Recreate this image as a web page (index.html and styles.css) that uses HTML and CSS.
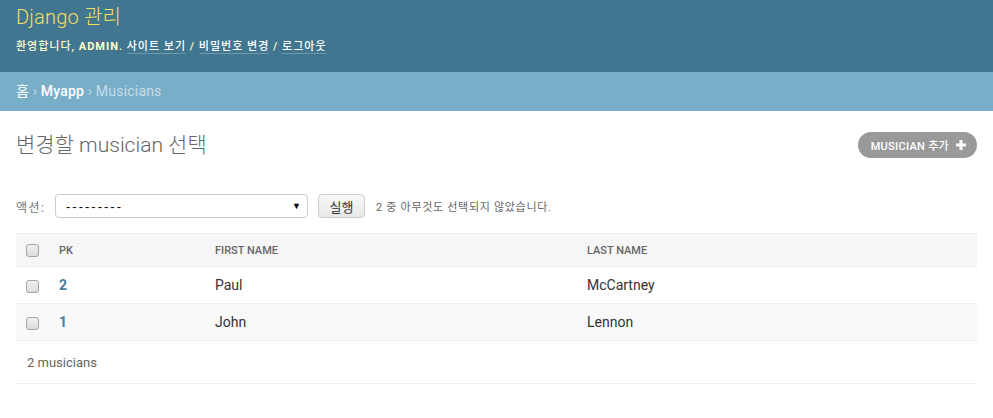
FILE: index.html
```html
<!DOCTYPE html>
<html lang="ko">
<head>
<meta charset="utf-8">
<title>변경할 musician 선택 | Django 사이트 관리</title>
<link rel="stylesheet" href="styles.css">
</head>
<body>
<header class="header">
  <h1 class="branding">Django 관리</h1>
  <div class="user-tools">환영합니다, <strong>ADMIN</strong>. <a href="#">사이트 보기</a> / <a href="#">비밀번호 변경</a> / <a href="#">로그아웃</a></div>
</header>
<nav class="breadcrumbs"><a href="#">홈</a> › <a href="#" class="strong">Myapp</a> › Musicians</nav>
<main class="content">
  <div class="title-row">
    <h1 class="title">변경할 musician 선택</h1>
    <a href="#" class="addlink">MUSICIAN 추가
      <svg class="plus" width="10" height="10" viewBox="0 0 10 10"><path d="M3.5 0h3v3.5H10v3H6.5V10h-3V6.5H0v-3h3.5z" fill="#fff"/></svg>
    </a>
  </div>
  <div class="actions">
    <span class="action-label">액션:</span>
    <div class="select"><span class="dashes">---------</span><span class="arrow">▼</span></div>
    <button class="go">실행</button>
    <span class="counter">2 중 아무것도 선택되지 않았습니다.</span>
  </div>
  <table class="result-list">
    <colgroup><col class="c0"><col class="c1"><col class="c2"><col class="c3"></colgroup>
    <thead>
      <tr><th class="cb"><input type="checkbox"></th><th>PK</th><th>FIRST NAME</th><th>LAST NAME</th></tr>
    </thead>
    <tbody>
      <tr class="row1"><td class="cb"><input type="checkbox"></td><th><a href="#">2</a></th><td>Paul</td><td>McCartney</td></tr>
      <tr class="row2"><td class="cb"><input type="checkbox"></td><th><a href="#">1</a></th><td>John</td><td>Lennon</td></tr>
    </tbody>
  </table>
  <p class="paginator">2 musicians</p>
</main>
</body>
</html>
```
FILE: styles.css
```css
* { box-sizing: border-box; }
html, body { margin: 0; padding: 0; }
body {
  font-family: Roboto, "Noto Sans CJK KR", "Liberation Sans", sans-serif;
  font-size: 14px;
  color: #333;
  background: #fff;
}
a { text-decoration: none; }

.header {
  background: #417690;
  height: 72px;
  padding: 5px 16px 0;
  color: #ffc;
}
.branding {
  margin: 0;
  font-size: 20px;
  line-height: 24px;
  font-weight: 300;
  letter-spacing: 0.2px;
  color: #f5dd5d;
}
.user-tools {
  margin-top: 8px;
  font-size: 11px;
  line-height: 20px;
  letter-spacing: 1px;
  font-weight: 500;
}
.user-tools strong { font-weight: 700; }
.user-tools a {
  color: #fff;
  border-bottom: 1px solid rgba(255,255,255,0.25);
}

.breadcrumbs {
  background: #79aec8;
  padding: 10px 16px;
  line-height: 19px;
  font-size: 14px;
  letter-spacing: 0.2px;
  color: #c4dce8;
}
.breadcrumbs a { color: #fff; }
.breadcrumbs a.strong { font-weight: 500; }

.content { padding: 21px 16px 0; }
.title-row {
  display: flex;
  justify-content: space-between;
  align-items: center;
  height: 26px;
}
.title {
  margin: 0;
  font-size: 21px;
  line-height: 24px;
  font-weight: 300;
  color: #666;
}
.addlink {
  display: flex;
  align-items: center;
  gap: 7px;
  height: 26px;
  padding: 0 11px 0 13px;
  border-radius: 13px;
  background: #999;
  color: #fff;
  font-size: 11px;
  font-weight: 500;
  letter-spacing: 0.3px;
}

.actions {
  display: flex;
  align-items: center;
  margin-top: 36px;
  height: 24px;
  font-size: 13px;
  color: #666;
}
.action-label { width: 39px; font-size: 12px; letter-spacing: 1.5px; color: #777; }
.select {
  width: 253px;
  height: 24px;
  border: 1px solid #ccc;
  border-radius: 4px;
  display: flex;
  justify-content: space-between;
  align-items: center;
  padding: 0 6px 0 10px;
  color: #000;
  font-size: 13px;
  font-family: "Liberation Sans", sans-serif;
}
.dashes { letter-spacing: 2px; }
.arrow { font-size: 9px; }
.go {
  margin-left: 10px;
  height: 24px;
  width: 47px;
  border: 1px solid #ccc;
  border-radius: 4px;
  background: linear-gradient(#f8f8f8, #e8e8e8);
  font-family: Roboto, "Noto Sans CJK KR", sans-serif;
  font-size: 13px;
  color: #333;
  padding: 0;
}
.counter { margin-left: 11px; font-size: 11px; letter-spacing: 0.7px; color: #666; }

.result-list {
  margin-top: 15px;
  width: 100%;
  border-collapse: collapse;
  table-layout: fixed;
}
.c0 { width: 43px; }
.c1 { width: 156px; }
.c2 { width: 372px; }
.result-list thead th {
  background: #f6f6f6;
  border-top: 1px solid #eee;
  border-bottom: 1px solid #eee;
  height: 33px;
  text-align: left;
  font-size: 11px;
  font-weight: 500;
  color: #666;
  padding: 0;
}
.result-list td, .result-list tbody th {
  height: 37px;
  border-bottom: 1px solid #eee;
  text-align: left;
  padding: 0;
  font-size: 14px;
  font-weight: 400;
  color: #333;
}
.result-list tbody th a { color: #447e9b; font-weight: 700; }
.row2 td, .row2 th { background: #f9f9f9; }
.result-list .cb { padding-left: 10px; }
.cb input {
  -webkit-appearance: none;
  appearance: none;
  margin: 0;
  width: 13px;
  height: 13px;
  vertical-align: middle;
  border: 1px solid #a6a6a6;
  border-radius: 3px;
  background: linear-gradient(#f0f0f0, #dcdcdc);
}

.paginator {
  margin: 0;
  height: 43px;
  line-height: 43px;
  padding-left: 11px;
  font-size: 13px;
  color: #666;
  border-bottom: 1px solid #eee;
}
```
